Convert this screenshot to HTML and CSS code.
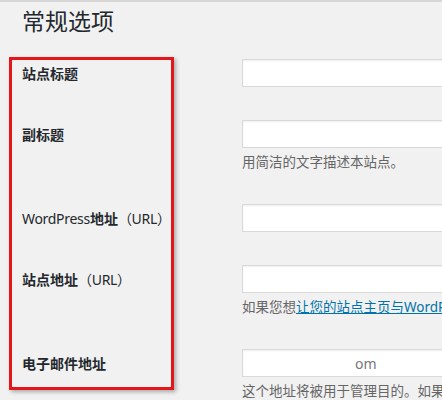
FILE: index.html
```html
<!DOCTYPE html>
<html lang="zh-CN">
<head>
    <meta charset="UTF-8">
    <meta name="viewport" content="width=device-width, initial-scale=1.0">
    <title>常规选项</title>
    <link rel="stylesheet" href="styles.css">
</head>
<body>
    <div class="wrap">
        <h1 class="page-title">常规选项</h1>
        <form class="settings">
            <div class="row">
                <label for="blogname" class="row-label">站点标题</label>
                <div class="row-field">
                    <input type="text" id="blogname" class="text-input">
                </div>
            </div>
            <div class="row">
                <label for="blogdescription" class="row-label">副标题</label>
                <div class="row-field">
                    <input type="text" id="blogdescription" class="text-input">
                    <p class="description">用简洁的文字描述本站点。</p>
                </div>
            </div>
            <div class="row">
                <label for="siteurl" class="row-label"><span class="latin">WordPress</span>地址<span class="latin">（URL）</span></label>
                <div class="row-field">
                    <input type="text" id="siteurl" class="text-input">
                </div>
            </div>
            <div class="row">
                <label for="home" class="row-label">站点地址<span class="latin">（URL）</span></label>
                <div class="row-field">
                    <input type="text" id="home" class="text-input">
                    <p class="description">如果您想<a href="#">让您的站点主页与WordPress安装目录不同</a>，请在此输入地址。</p>
                </div>
            </div>
            <div class="row">
                <label for="admin_email" class="row-label">电子邮件地址</label>
                <div class="row-field">
                    <input type="text" id="admin_email" class="text-input redacted" value="om">
                    <p class="description">这个地址将被用于管理目的。如果您修改此地址，我们将会发送一封确认邮件。</p>
                </div>
            </div>
        </form>

        <!-- 标注框 -->
        <div class="highlight-box"></div>
    </div>
</body>
</html>
```

FILE: styles.css
```css
* {
    margin: 0;
    padding: 0;
    box-sizing: border-box;
}

html, body {
    overflow: hidden;
}

body {
    background-color: #f1f1f1;
    border-top: 2px solid #d6d6d6;
    color: #23282d;
    font-family: "Noto Sans", "Noto Sans CJK SC", sans-serif;
}

.wrap {
    position: relative;
    padding-left: 22px;
}

.page-title {
    font-size: 23px;
    font-weight: normal;
    line-height: 29px;
    padding-top: 5px;
    margin-bottom: 7px;
    color: #23282d;
}

.row {
    display: grid;
    grid-template-columns: 220px 1fr;
    padding: 16px 0 17px;
}

.row-label {
    margin-top: 5px;
    font-size: 14px;
    line-height: 20px;
    font-weight: 700;
    white-space: nowrap;
}

.row-label .latin {
    font-weight: 400;
    letter-spacing: -0.3px;
}

.text-input {
    display: block;
    width: 360px;
    height: 28px;
    padding: 0 8px;
    background-color: #fff;
    border: 1px solid #d9d9d9;
    box-shadow: inset 0 1px 2px rgba(0, 0, 0, 0.07);
    font-family: "Noto Sans", sans-serif;
    font-size: 14px;
    color: #777;
}

/* 被遮挡的邮箱 */
.redacted {
    text-indent: 104px;
}

.description {
    margin-top: 5px;
    font-size: 13.5px;
    line-height: 18px;
    color: #666;
    white-space: nowrap;
}

.description a {
    color: #0073aa;
    text-decoration: underline;
}

.highlight-box {
    position: absolute;
    left: 9px;
    top: 55px;
    width: 165px;
    height: 333px;
    border: 3px solid #e3161b;
    box-shadow: 2px 2px 4px rgba(0, 0, 0, 0.3);
    pointer-events: none;
}
```
